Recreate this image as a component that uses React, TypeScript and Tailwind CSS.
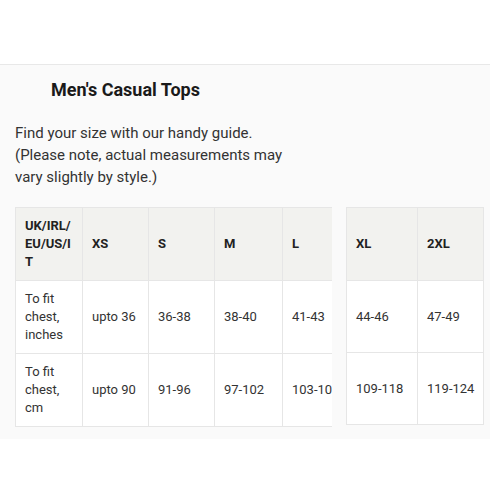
import React from "react";

const sizes1 = ["XS", "S", "M", "L"];
const inches1 = ["upto 36", "36-38", "38-40", "41-43"];
const cm1 = ["upto 90", "91-96", "97-102", "103-108"];

const th = "border border-[#e6e6e6] bg-[#f2f2ef] px-[9px] py-[9px] text-left align-middle font-bold text-[13px] leading-[18px] text-[#222] whitespace-nowrap";
const td = "border border-[#e6e6e6] bg-white px-[9px] py-[9px] text-left align-middle text-[13px] leading-[18px] text-[#333] whitespace-nowrap";

export default function App() {
  return (
    <div className="w-[500px] h-[500px] bg-white" style={{ fontFamily: "Roboto, 'Noto Sans', sans-serif" }}>
      <div className="h-[64px]" />
      <div className="w-[490px] border-t border-[#e8e8e8] bg-[#fafafa] pb-[12px]">
        <h2 className="pl-[51px] pt-[12px] text-[18px] leading-[26px] font-bold text-[#1a1a1a]">Men's Casual Tops</h2>
        <p className="pl-[15px] pt-[19px] text-[15px] leading-[22px] text-[#333]">
          Find your size with our handy guide.
          <br />
          (Please note, actual measurements may
          <br />
          vary slightly by style.)
        </p>
        <div className="mt-[19px] flex pl-[15px] gap-[14px]">
          <div className="w-[317px] overflow-hidden">
            <table className="border-collapse table-fixed w-[337px]">
              <colgroup>
                <col className="w-[67px]" />
                <col className="w-[66px]" />
                <col className="w-[66px]" />
                <col className="w-[68px]" />
                <col className="w-[70px]" />
              </colgroup>
              <tbody>
                <tr className="h-[73px]">
                  <th className={th}>UK/IRL/<br />EU/US/I<br />T</th>
                  {sizes1.map((s) => (
                    <th key={s} className={th}>{s}</th>
                  ))}
                </tr>
                <tr className="h-[72px]">
                  <td className={td}>To fit<br />chest,<br />inches</td>
                  {inches1.map((s) => (
                    <td key={s} className={td}>{s}</td>
                  ))}
                </tr>
                <tr className="h-[72px]">
                  <td className={td}>To fit<br />chest,<br />cm</td>
                  {cm1.map((s) => (
                    <td key={s} className={td}>{s}</td>
                  ))}
                </tr>
              </tbody>
            </table>
          </div>
          <table className="border-collapse table-fixed w-[137px] self-start">
            <colgroup>
              <col className="w-[71px]" />
              <col className="w-[66px]" />
            </colgroup>
            <tbody>
              <tr className="h-[73px]">
                <th className={th}>XL</th>
                <th className={th}>2XL</th>
              </tr>
              <tr className="h-[72px]">
                <td className={td}>44-46</td>
                <td className={td}>47-49</td>
              </tr>
              <tr className="h-[72px]">
                <td className={td}>109-118</td>
                <td className={td}>119-124</td>
              </tr>
            </tbody>
          </table>
        </div>
      </div>
    </div>
  );
}
